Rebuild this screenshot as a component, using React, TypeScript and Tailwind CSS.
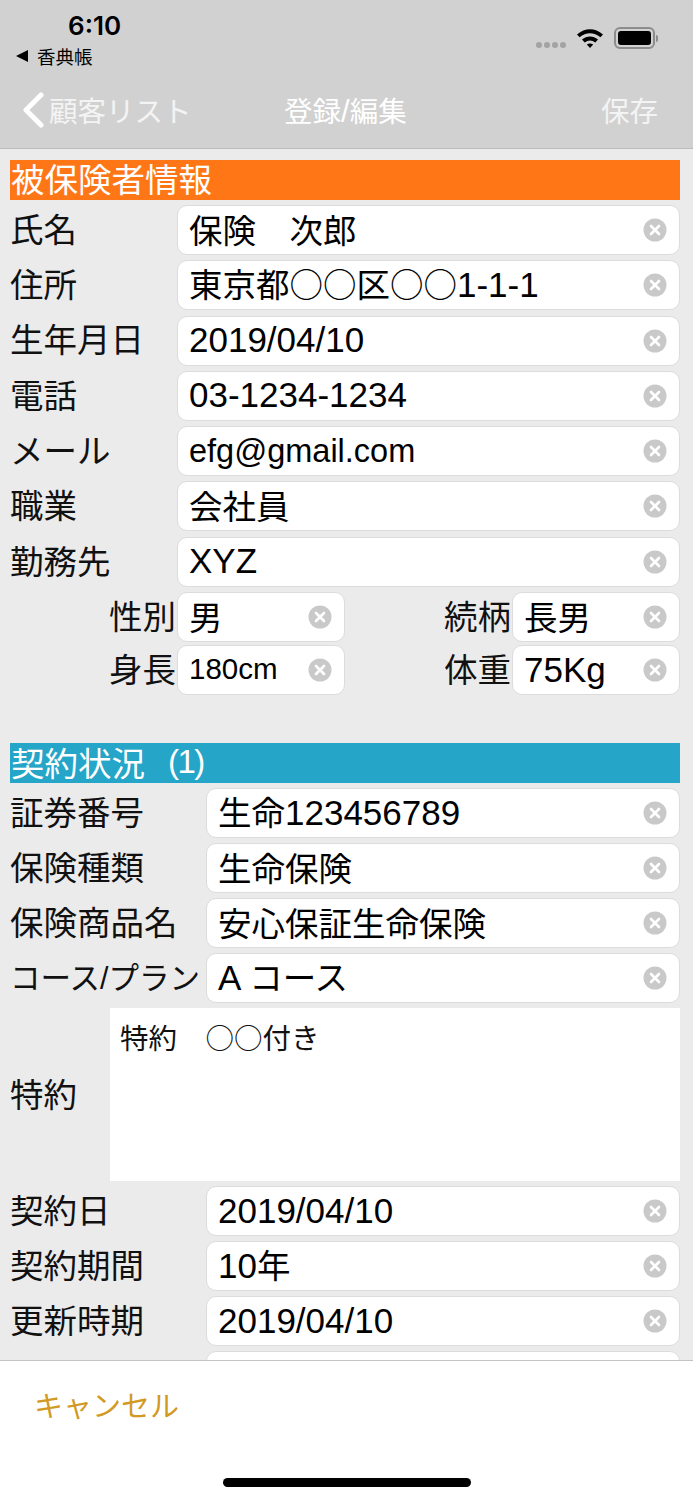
const CJK = "font-['Noto_Sans_CJK_JP','Liberation_Sans',sans-serif]";
const LATIN = "font-['Liberation_Sans','Noto_Sans_CJK_JP',sans-serif]";

function Mixed({ text, latin = "text-[35px]" }: { text: string; latin?: string }) {
  return (
    <>
      {text.split(/([\x20-\x7e]+)/).map((part, i) =>
        i % 2 === 1 ? (
          <span key={i} className={`${LATIN} ${latin}`}>
            {part}
          </span>
        ) : (
          part
        ),
      )}
    </>
  );
}

function ClearIcon() {
  return (
    <svg viewBox="0 0 24 24" className="h-6 w-6 shrink-0">
      <circle cx="12" cy="12" r="11.5" fill="#c9c9c9" />
      <path d="M8 8l8 8M16 8l-8 8" stroke="#fff" strokeWidth="2.6" strokeLinecap="round" />
    </svg>
  );
}

function Field({ value, latin, className }: { value?: string; latin?: string; className?: string }) {
  return (
    <div
      className={`flex h-[50px] items-center rounded-[10px] border border-[#dcdcdc] bg-white pl-[11px] pr-[12px] text-[33.5px] text-black ${
        className ?? ""
      }`}
    >
      <span className="flex-1 whitespace-pre pb-[3px] leading-none">{value && <Mixed text={value} latin={latin} />}</span>
      <ClearIcon />
    </div>
  );
}

function Row({ label, value, width, latin }: { label: string; value: string; width: string; latin?: string }) {
  const long = label.length > 6;
  return (
    <div className="flex items-center">
      <div
        className={`${width} shrink-0 whitespace-nowrap leading-none text-[#111] ${
          long ? "pb-[2px] text-[30.5px]" : "pb-[5px] text-[33.5px]"
        }`}
      >
        <Mixed text={label} latin="text-[30.5px]" />
      </div>
      <Field value={value} latin={latin} className="flex-1" />
    </div>
  );
}

function PairCell({ label, value, latin }: { label: string; value: string; latin?: string }) {
  return (
    <div className="flex items-center justify-end">
      <div className="mr-px whitespace-nowrap pb-[5px] text-[33.5px] leading-none text-[#111]">{label}</div>
      <Field value={value} latin={latin} className="w-[168px]" />
    </div>
  );
}

function SectionTitle({ title, color }: { title: string; color: string }) {
  return (
    <div className={`flex h-10 items-center whitespace-pre pb-[4px] pl-px text-[33.5px] leading-none text-white ${color}`}>
      <Mixed text={title} latin="text-[33px] tracking-[-1.5px]" />
    </div>
  );
}

const insured = [
  { label: "氏名", value: "保険　次郎" },
  { label: "住所", value: "東京都○○区○○1-1-1" },
  { label: "生年月日", value: "2019/04/10" },
  { label: "電話", value: "03-1234-1234" },
  { label: "メール", value: "efg@gmail.com", latin: "text-[32.5px]" },
  { label: "職業", value: "会社員" },
  { label: "勤務先", value: "XYZ" },
];

const contractTop = [
  { label: "証券番号", value: "生命123456789" },
  { label: "保険種類", value: "生命保険" },
  { label: "保険商品名", value: "安心保証生命保険" },
  { label: "コース/プラン", value: "A コース" },
];

const contractBottom = [
  { label: "契約日", value: "2019/04/10" },
  { label: "契約期間", value: "10年" },
  { label: "更新時期", value: "2019/04/10" },
];

export default function App() {
  return (
    <div className={`flex h-[1500px] w-[693px] flex-col overflow-hidden bg-[#ebebeb] ${CJK}`}>
      <header className="h-[149px] shrink-0 border-b border-[#bdbdbd] bg-[#d1d1d1]">
        <div className="flex h-[74px] justify-between">
          <div className="pl-4 pt-[11px]">
            <div className="pl-[52px] font-['Inter',sans-serif] text-[26px] font-semibold leading-[30px] text-black">6:10</div>
            <div className="mt-[4px] flex items-center gap-[9px] text-[18.5px] leading-[22px] text-black">
              <span className="h-0 w-0 border-y-[6px] border-r-[12px] border-y-transparent border-r-black" />
              香典帳
            </div>
          </div>
          <div className="flex items-start gap-[10px] pr-[35px] pt-[27px]">
            <div className="mt-[15px] flex gap-[2px]">
              <span className="h-[6px] w-[6px] rounded-full bg-[#a3a3a3]" />
              <span className="h-[6px] w-[6px] rounded-full bg-[#a3a3a3]" />
              <span className="h-[6px] w-[6px] rounded-full bg-[#a3a3a3]" />
              <span className="h-[6px] w-[6px] rounded-full bg-[#a3a3a3]" />
            </div>
            <svg viewBox="0 0 28 22" className="h-[22px] w-[28px]">
              <path d="M1 7.5C9 .5 19 .5 27 7.5l-2.6 2.8c-6.4-5.4-14.4-5.4-20.8 0z" fill="#000" />
              <path d="M6 12.6c5-4.2 11-4.2 16 0l-2.7 2.8c-3.4-2.7-7.2-2.7-10.6 0z" fill="#000" />
              <path d="M10.8 17.6c2-1.5 4.4-1.5 6.4 0L14 21z" fill="#000" />
            </svg>
            <div className="flex items-center">
              <div className="flex h-[22px] w-[41px] items-center justify-center rounded-[6px] border-2 border-[#8c8c8c]">
                <div className="h-[14px] w-[33px] rounded-[3px] bg-black" />
              </div>
              <div className="ml-px h-[7px] w-[2px] rounded-r-full bg-[#8c8c8c]" />
            </div>
          </div>
        </div>
        <nav className="relative flex h-[72px] items-center justify-between text-[28.5px] leading-none text-white">
          <div className="flex items-center">
            <svg viewBox="0 0 24 36" className="ml-[21px] h-[36px] w-[24px]">
              <path d="M20 3L5 18l15 15" fill="none" stroke="#fff" strokeWidth="5" strokeLinecap="round" strokeLinejoin="round" />
            </svg>
            <span className="ml-[4px] text-[#f4f4f4]">顧客リスト</span>
          </div>
          <span className="absolute left-[284px] top-[22px] whitespace-nowrap">
            登録<span className={`${LATIN} text-[31px]`}>/</span>編集
          </span>
          <span className="pr-[35px] text-[#f4f4f4]">保存</span>
        </nav>
      </header>

      <main className="min-h-0 flex-1 overflow-hidden pl-[10px] pr-[13px] pt-[11px]">
        <SectionTitle title="被保険者情報" color="bg-[#ff7617]" />
        <div className="mt-[5px] flex flex-col gap-[5.3px]">
          {insured.map((row) => (
            <Row key={row.label} {...row} width="w-[167px]" />
          ))}
        </div>
        <div className="mt-[5px] grid grid-cols-[335px_1fr] gap-y-[3.5px]">
          <PairCell label="性別" value="男" />
          <PairCell label="続柄" value="長男" />
          <PairCell label="身長" value="180cm" latin="inline-block -translate-y-[3px] text-[29.5px]" />
          <PairCell label="体重" value="75Kg" />
        </div>

        <div className="mt-[48px]">
          <SectionTitle title="契約状況   (1)" color="bg-[#25a5c8]" />
        </div>
        <div className="mt-[5px] flex flex-col gap-[5px]">
          {contractTop.map((row) => (
            <Row key={row.label} {...row} width="w-[196px]" />
          ))}
          <div className="flex items-center">
            <div className="w-[100px] shrink-0 pb-[4px] text-[33.5px] leading-none text-[#111]">特約</div>
            <div className="h-[173px] flex-1 whitespace-pre bg-white pl-[10px] pt-[13px] text-[28.5px] leading-[32px] text-[#111]">
              特約　○○付き
            </div>
          </div>
          {contractBottom.map((row) => (
            <Row key={row.label} {...row} width="w-[196px]" />
          ))}
          <div className="flex">
            <div className="w-[196px] shrink-0" />
            <Field className="flex-1" />
          </div>
        </div>
      </main>

      <footer className="relative z-10 h-[140px] shrink-0 border-t border-[#c4c4c4] bg-white">
        <div className="pl-[34px] pt-[27px] text-[29px] leading-[32px] text-[#d29a22]">キャンセル</div>
        <div className="absolute bottom-[13px] left-[223px] h-[9px] w-[248px] rounded-full bg-black" />
      </footer>
    </div>
  );
}
